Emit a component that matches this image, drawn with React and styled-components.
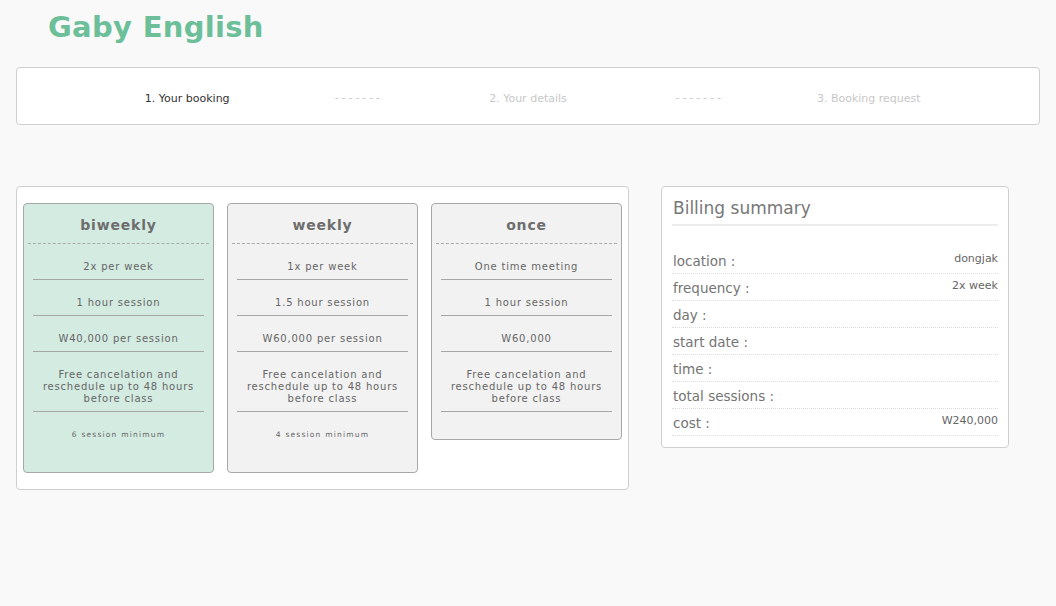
import React from "react";
import styled, { createGlobalStyle } from "styled-components";

const GlobalStyle = createGlobalStyle`
    body {
        margin: 0;
        background: #f9f9f9;
        font-family: "DejaVu Sans", "Liberation Sans", sans-serif;
    }
`;

const Page = styled.div`
    padding: 0 16px;
    width: 1024px;
`;

const Logo = styled.h1`
    margin: 0;
    padding: 9px 0 0 32px;
    height: 67px;
    box-sizing: border-box;
    font-size: 29px;
    line-height: 36px;
    font-weight: bold;
    color: #6cbf99;
    letter-spacing: 0.3px;
`;

const Stepper = styled.div`
    display: grid;
    grid-template-columns: repeat(5, 1fr);
    padding: 0 85px;
    height: 58px;
    align-items: center;
    background: #fff;
    border: 1px solid #cfcfcf;
    border-radius: 4px;
    box-sizing: border-box;
`;

const Step = styled.div`
    text-align: center;
    font-size: 11px;
    padding-top: 4px;
    letter-spacing: ${(p) => (p.$dashes ? "0.3px" : "0")};
    font-family: ${(p) => (p.$dashes ? "\"Liberation Mono\", monospace" : "inherit")};
    color: ${(p) => (p.$active ? "#333" : "#c8c8c8")};
`;

const Main = styled.div`
    display: flex;
    align-items: flex-start;
    gap: 32px;
    margin-top: 61px;
`;

const PlansPanel = styled.div`
    display: flex;
    align-items: flex-start;
    gap: 13px;
    width: 613px;
    box-sizing: border-box;
    padding: 16px 6px;
    background: #fff;
    border: 1px solid #cfcfcf;
    border-radius: 4px;
`;

const PlanCard = styled.div`
    width: 192px;
    box-sizing: border-box;
    padding: 12px 4px 27px;
    background: ${(p) => (p.$selected ? "#d3ebe1" : "#f2f2f2")};
    border: 1px solid #a8a8a8;
    border-radius: 4px;
    color: #666;
    text-align: center;
    letter-spacing: 0.8px;
`;

const PlanTitle = styled.div`
    font-size: 14px;
    font-weight: bold;
    line-height: 18px;
    padding-bottom: 9px;
    border-bottom: 1px dashed #aaa;
    color: #6e6e6e;
`;

const PlanItem = styled.div`
    margin: 0 5px;
    padding: 17px 0 6px;
    font-size: 10px;
    line-height: 12px;
    border-bottom: 1px solid #a6a6a6;
`;

const PlanNote = styled.div`
    padding: 17px 0 4px;
    font-size: 7.5px;
    line-height: 12px;
    letter-spacing: 1.2px;
`;

const Summary = styled.div`
    width: 348px;
    box-sizing: border-box;
    padding: 8px 10px 11px;
    background: #fff;
    border: 1px solid #cfcfcf;
    border-radius: 4px;
    color: #777;
`;

const SummaryTitle = styled.div`
    font-size: 17px;
    line-height: 26px;
    padding: 0 0 3px 1px;
    border-bottom: 2px solid #ececec;
    margin-bottom: 21px;
`;

const SummaryRow = styled.div`
    display: flex;
    justify-content: space-between;
    align-items: flex-start;
    height: 27px;
    box-sizing: border-box;
    padding: 6px 0 0 1px;
    border-bottom: 1px dotted #ddd;
`;

const RowLabel = styled.span`
    font-size: 13.5px;
    line-height: 16px;
    color: #747474;
`;

const RowValue = styled.span`
    font-size: 11px;
    line-height: 12px;
    color: #666;
`;

const plans = [
    {
        name: "biweekly",
        items: ["2x per week", "1 hour session", "W40,000 per session"],
        note: "6 session minimum",
        selected: true,
    },
    {
        name: "weekly",
        items: ["1x per week", "1.5 hour session", "W60,000 per session"],
        note: "4 session minimum",
    },
    {
        name: "once",
        items: ["One time meeting", "1 hour session", "W60,000"],
    },
];

const summary = [
    ["location :", "dongjak"],
    ["frequency :", "2x week"],
    ["day :", ""],
    ["start date :", ""],
    ["time :", ""],
    ["total sessions :", ""],
    ["cost :", "W240,000"],
];

const App = () => {
    return (
        <Page>
            <GlobalStyle />
            <Logo>Gaby English</Logo>
            <Stepper>
                <Step $active>1. Your booking</Step>
                <Step $dashes>-------</Step>
                <Step>2. Your details</Step>
                <Step $dashes>-------</Step>
                <Step>3. Booking request</Step>
            </Stepper>
            <Main>
                <PlansPanel>
                    {plans.map((plan) => (
                        <PlanCard key={plan.name} $selected={plan.selected}>
                            <PlanTitle>{plan.name}</PlanTitle>
                            {plan.items.map((item) => (
                                <PlanItem key={item}>{item}</PlanItem>
                            ))}
                            <PlanItem>
                                Free cancelation and
                                <br />
                                reschedule up to 48 hours
                                <br />
                                before class
                            </PlanItem>
                            {plan.note && <PlanNote>{plan.note}</PlanNote>}
                        </PlanCard>
                    ))}
                </PlansPanel>
                <Summary>
                    <SummaryTitle>Billing summary</SummaryTitle>
                    {summary.map(([label, value]) => (
                        <SummaryRow key={label}>
                            <RowLabel>{label}</RowLabel>
                            <RowValue>{value}</RowValue>
                        </SummaryRow>
                    ))}
                </Summary>
            </Main>
        </Page>
    );
};

export default App;
